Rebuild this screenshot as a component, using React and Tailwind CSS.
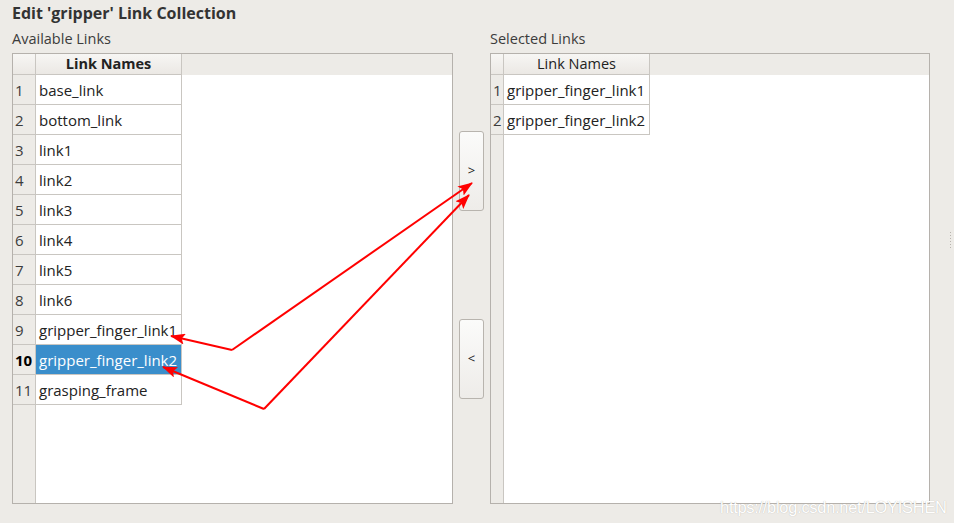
import React from "react";

const available = [
  "base_link",
  "bottom_link",
  "link1",
  "link2",
  "link3",
  "link4",
  "link5",
  "link6",
  "gripper_finger_link1",
  "gripper_finger_link2",
  "grasping_frame",
];
const selected = ["gripper_finger_link1", "gripper_finger_link2"];

function LinkTable({ items, corner, boldHeader, activeRow }) {
  return (
    <div className="flex h-[451px] border border-[#b5b1ac] bg-white">
      {/* row header column */}
      <div className={`flex flex-col ${corner} shrink-0 bg-[#edebe7] border-r border-[#c9c6c1]`}>
        <div className="h-[21px] border-b border-[#c9c6c1] bg-gradient-to-b from-[#f7f6f4] to-[#ebe8e4]" />
        {items.map((_, i) => (
          <div
            key={i}
            className={`h-[30px] border-b border-[#c9c6c1] pl-[2px] leading-[30px] text-[15px] text-[#3c3c3c] ${
              activeRow === i ? "font-bold text-black" : ""
            }`}
          >
            {i + 1}
          </div>
        ))}
      </div>
      <div className="flex flex-1 flex-col">
        <div className="flex h-[21px]">
          <div
            className={`w-[146px] border-r border-b border-[#c9c6c1] bg-gradient-to-b from-[#f7f6f4] to-[#ebe8e4] text-center text-[14.5px] leading-[20px] text-[#222] ${
              boldHeader ? "font-bold" : ""
            }`}
          >
            Link Names
          </div>
          <div className="flex-1 bg-[#edebe7]" />
        </div>
        {items.map((name, i) => (
          <div
            key={name}
            className={`h-[30px] w-[146px] border-r border-b border-[#c9c6c1] pl-[3px] leading-[30px] text-[15px] whitespace-nowrap ${
              activeRow === i ? "bg-[#3a8ecb] text-white" : "text-[#222]"
            }`}
          >
            {name}
          </div>
        ))}
      </div>
    </div>
  );
}

function MoveButton({ label }) {
  return (
    <button className="h-[80px] w-[25px] rounded-[3px] border border-[#b8b4ae] bg-gradient-to-b from-[#fbfbfa] to-[#eeece9] text-[13px] text-[#222]">
      {label}
    </button>
  );
}

export default function App() {
  return (
    <div
      className="relative h-[523px] w-[954px] overflow-hidden bg-[#edebe7] text-[#3c3c3c]"
      style={{ fontFamily: '"Open Sans", "DejaVu Sans", sans-serif' }}
    >
      <div className="h-[26px] pl-[12px] text-[16px] font-bold leading-[26px] text-[#333]">
        Edit 'gripper' Link Collection
      </div>

      <div className="flex pl-[12px]">
        <div className="w-[441px]">
          <div className="h-[27px] text-[14.5px] leading-[25px]">Available Links</div>
          <LinkTable items={available} corner="w-[23px]" boldHeader activeRow={9} />
        </div>

        <div className="ml-[6px] flex w-[31px] flex-col pt-[105px]">
          <MoveButton label=">" />
          <div className="h-[108px]" />
          <MoveButton label="<" />
        </div>

        <div className="w-[440px]">
          <div className="h-[27px] text-[14.5px] leading-[25px]">Selected Links</div>
          <LinkTable items={selected} corner="w-[13px]" />
        </div>
      </div>

      {/* splitter grip */}
      <div className="absolute left-[950px] top-[232px] flex flex-col gap-[2px]">
        {[0, 1, 2, 3, 4, 5].map((i) => (
          <div key={i} className="h-[1px] w-[1px] bg-[#b8b4ae]" />
        ))}
      </div>

      {/* annotation arrows */}
      <svg className="pointer-events-none absolute inset-0" width="954" height="523">
        <defs>
          <marker id="head" markerWidth="15" markerHeight="11" refX="14" refY="5.5" orient="auto" markerUnits="userSpaceOnUse">
            <path d="M0,0 L15,5.5 L0,11 L3,5.5 Z" fill="#ff0000" />
          </marker>
        </defs>
        <g stroke="#ff0000" strokeWidth="2" fill="none">
          <polyline points="232,350 472,183" markerEnd="url(#head)" />
          <polyline points="232,350 171,336" markerEnd="url(#head)" />
          <polyline points="264,409 469,195" markerEnd="url(#head)" />
          <polyline points="264,409 163,367" markerEnd="url(#head)" />
        </g>
      </svg>

      <div
        className="absolute left-[720px] top-[495px] text-[16.5px] tracking-[-0.3px] text-white"
        style={{ fontFamily: '"Liberation Sans", sans-serif', textShadow: "0 0 1px #b0aca6" }}
      >
        https://blog.csdn.net/LOYISHEN
      </div>
    </div>
  );
}
